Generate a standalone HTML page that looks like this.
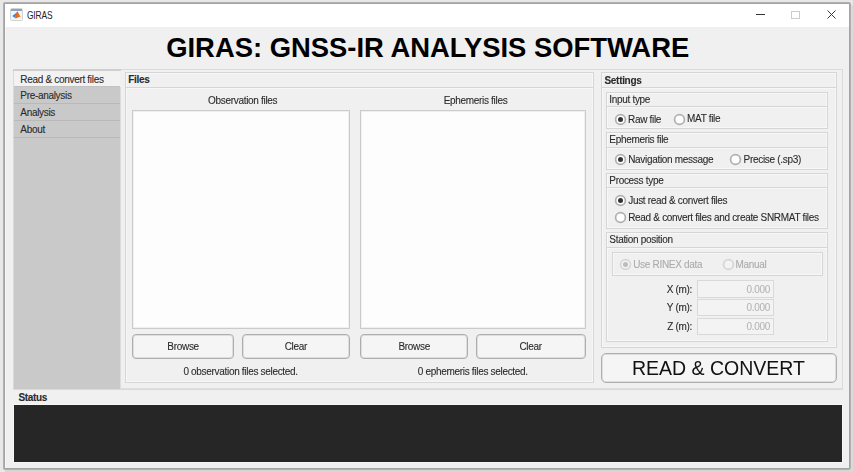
<!DOCTYPE html>
<html><head><meta charset="utf-8"><style>
html,body{margin:0;padding:0;}
body{width:853px;height:472px;overflow:hidden;background:#e8e8e8;position:relative;font-family:"Liberation Sans",sans-serif;}
.r{position:absolute;}
.t{position:absolute;white-space:nowrap;-webkit-text-stroke:0.1px currentColor;}
#wrap{position:absolute;left:0;top:0;width:853px;height:472px;filter:blur(0.3px);}
</style></head><body><div id="wrap">
<div class="r" style="left:851px;top:5px;width:2px;height:467px;background:#dadada;"></div>
<div class="r" style="left:5px;top:470px;width:848px;height:2px;background:#d6d6d6;"></div>
<div class="r" style="left:3px;top:2px;width:848px;height:468px;border:2px solid #b0b0b0;border-radius:2px;box-sizing:border-box;background:#f0f0f0;"></div>
<div class="r" style="left:4px;top:3px;width:846px;height:466px;border:1px solid #a4a4a4;border-radius:1px;box-sizing:border-box;"></div>
<div class="r" style="left:5px;top:4px;width:844px;height:23px;background:#ffffff;"></div>
<div class="r" style="left:5px;top:27px;width:1px;height:441px;background:#f7f7f7;"></div>
<div class="t" style="left:26.80px;top:9.61px;font-size:10.5px;line-height:10.5px;font-weight:400;color:#222;letter-spacing:-0.2px;transform:scaleX(0.8);transform-origin:0 0;-webkit-text-stroke:0;">GIRAS</div>
<svg class="r" style="left:10px;top:8px" width="13" height="13" viewBox="0 0 13 13">
<rect x="0.5" y="0.5" width="12" height="12" rx="1" fill="#f6f6f6" stroke="#d2d2d2"/>
<rect x="1" y="1" width="11" height="2" fill="#86a4cc"/>
<path d="M2.2 8 L6.8 4.5 L5.4 8.6 L5.9 10.4 Z" fill="#3d86d0"/>
<path d="M7.5 3.3 L10.8 9.5 L9.5 8.8 L5.8 10.5 L5 8 Z" fill="#e66a1f"/>
<path d="M6.5 4.8 L7.5 3.3 L5.2 8.5 Z" fill="#b8401a"/>
</svg>
<div class="r" style="left:756px;top:14px;width:9px;height:1px;background:#333;"></div>
<div class="r" style="left:791px;top:11px;width:9px;height:8px;border:1px solid #cccccc;box-sizing:border-box;"></div>
<svg class="r" style="left:827px;top:10px" width="9" height="9" viewBox="0 0 9 9">
<path d="M0.5 0.5 L8.5 8.5 M8.5 0.5 L0.5 8.5" stroke="#3a3a3a" stroke-width="1"/></svg>
<div class="t" style="left:166.20px;top:33.91px;font-size:27.4px;line-height:27.4px;font-weight:700;color:#000;letter-spacing:0px;-webkit-text-stroke:0;">GIRAS: GNSS-IR ANALYSIS SOFTWARE</div>
<div class="r" style="left:13px;top:69px;width:830px;height:321px;border:1px solid #dadada;box-sizing:border-box;"></div>
<div class="r" style="left:13px;top:388px;width:830px;height:1px;background:#dedede;"></div>
<div class="r" style="left:14px;top:86px;width:106px;height:303px;background:#c9c9c9;"></div>
<div class="r" style="left:14px;top:71px;width:106px;height:15px;background:#f2f2f2;"></div>
<div class="r" style="left:13px;top:69px;width:108px;height:2px;background:#cfcfcf;"></div>
<div class="r" style="left:14px;top:86px;width:106px;height:1px;background:#c2c2c2;"></div>
<div class="r" style="left:120px;top:87px;width:1px;height:302px;background:#dcdcdc;"></div>
<div class="r" style="left:14px;top:103px;width:106px;height:1px;background:#b9b9b9;"></div>
<div class="r" style="left:14px;top:120px;width:106px;height:1px;background:#b9b9b9;"></div>
<div class="r" style="left:14px;top:137px;width:106px;height:1px;background:#b9b9b9;"></div>
<div class="t" style="left:20.30px;top:75.23px;font-size:10px;line-height:10px;font-weight:400;color:#2b2b2b;letter-spacing:-0.31px;">Read &amp; convert files</div>
<div class="t" style="left:20.30px;top:91.33px;font-size:10px;line-height:10px;font-weight:400;color:#2b2b2b;letter-spacing:-0.31px;">Pre-analysis</div>
<div class="t" style="left:20.30px;top:108.33px;font-size:10px;line-height:10px;font-weight:400;color:#2b2b2b;letter-spacing:-0.31px;">Analysis</div>
<div class="t" style="left:20.30px;top:125.44px;font-size:10px;line-height:10px;font-weight:400;color:#2b2b2b;letter-spacing:-0.31px;">About</div>
<div class="r" style="left:125px;top:72px;width:469px;height:311px;border:1px solid #d6d6d6;box-sizing:border-box;"></div>
<div class="r" style="left:126px;top:73px;width:467px;height:309px;border:1px solid #f7f7f7;box-sizing:border-box;"></div>
<div class="r" style="left:126px;top:87px;width:467px;height:1px;background:#d6d6d6;"></div>
<div class="r" style="left:126px;top:88px;width:467px;height:1px;background:#f7f7f7;"></div>
<div class="t" style="left:128.20px;top:75.33px;font-size:10px;line-height:10px;font-weight:700;color:#2b2b2b;letter-spacing:-0.31px;">Files</div>
<div class="t" style="left:-57.30px;width:600px;text-align:center;top:95.83px;font-size:10px;line-height:10px;font-weight:400;color:#2b2b2b;letter-spacing:-0.31px;">Observation files</div>
<div class="t" style="left:175.50px;width:600px;text-align:center;top:96.03px;font-size:10px;line-height:10px;font-weight:400;color:#2b2b2b;letter-spacing:-0.31px;">Ephemeris files</div>
<div class="r" style="left:132px;top:110px;width:218px;height:219px;border:1px solid #cbcbcb;background:#fdfdfd;box-sizing:border-box;box-shadow:inset 0 0 0 1px #efefef;"></div>
<div class="r" style="left:360px;top:110px;width:226px;height:219px;border:1px solid #cbcbcb;background:#fdfdfd;box-sizing:border-box;box-shadow:inset 0 0 0 1px #efefef;"></div>
<div class="r" style="left:132px;top:334px;width:102px;height:25px;border:1px solid #aeaeae;border-radius:4px;background:#f5f5f5;box-sizing:border-box;box-shadow:inset 0 0 0 1px #dedede;"></div>
<div class="r" style="left:242px;top:334px;width:108px;height:25px;border:1px solid #aeaeae;border-radius:4px;background:#f5f5f5;box-sizing:border-box;box-shadow:inset 0 0 0 1px #dedede;"></div>
<div class="r" style="left:360px;top:334px;width:108px;height:25px;border:1px solid #aeaeae;border-radius:4px;background:#f5f5f5;box-sizing:border-box;box-shadow:inset 0 0 0 1px #dedede;"></div>
<div class="r" style="left:476px;top:334px;width:110px;height:25px;border:1px solid #aeaeae;border-radius:4px;background:#f5f5f5;box-sizing:border-box;box-shadow:inset 0 0 0 1px #dedede;"></div>
<div class="t" style="left:-116.90px;width:600px;text-align:center;top:342.34px;font-size:10px;line-height:10px;font-weight:400;color:#2b2b2b;letter-spacing:-0.31px;">Browse</div>
<div class="t" style="left:-4.20px;width:600px;text-align:center;top:342.34px;font-size:10px;line-height:10px;font-weight:400;color:#2b2b2b;letter-spacing:-0.31px;">Clear</div>
<div class="t" style="left:114.20px;width:600px;text-align:center;top:342.34px;font-size:10px;line-height:10px;font-weight:400;color:#2b2b2b;letter-spacing:-0.31px;">Browse</div>
<div class="t" style="left:230.60px;width:600px;text-align:center;top:342.34px;font-size:10px;line-height:10px;font-weight:400;color:#2b2b2b;letter-spacing:-0.31px;">Clear</div>
<div class="t" style="left:-59.40px;width:600px;text-align:center;top:367.34px;font-size:10px;line-height:10px;font-weight:400;color:#2b2b2b;letter-spacing:-0.31px;">0 observation files selected.</div>
<div class="t" style="left:172.80px;width:600px;text-align:center;top:367.34px;font-size:10px;line-height:10px;font-weight:400;color:#2b2b2b;letter-spacing:-0.31px;">0 ephemeris files selected.</div>
<div class="r" style="left:601px;top:72px;width:236px;height:276px;border:1px solid #d6d6d6;box-sizing:border-box;"></div>
<div class="r" style="left:602px;top:73px;width:234px;height:274px;border:1px solid #f7f7f7;box-sizing:border-box;"></div>
<div class="r" style="left:602px;top:87px;width:234px;height:1px;background:#d6d6d6;"></div>
<div class="r" style="left:602px;top:88px;width:234px;height:1px;background:#f7f7f7;"></div>
<div class="t" style="left:604.50px;top:75.63px;font-size:10px;line-height:10px;font-weight:700;color:#2b2b2b;letter-spacing:-0.31px;">Settings</div>
<div class="r" style="left:606px;top:92px;width:222px;height:37px;border:1px solid #d6d6d6;box-sizing:border-box;"></div>
<div class="r" style="left:607px;top:93px;width:220px;height:35px;border:1px solid #f7f7f7;box-sizing:border-box;"></div>
<div class="r" style="left:607px;top:106px;width:220px;height:1px;background:#d6d6d6;"></div>
<div class="r" style="left:607px;top:107px;width:220px;height:1px;background:#f7f7f7;"></div>
<div class="t" style="left:609.30px;top:94.94px;font-size:10px;line-height:10px;font-weight:400;color:#2b2b2b;letter-spacing:-0.31px;">Input type</div>
<svg class="r" style="left:614.00px;top:112.50px" width="13" height="13" viewBox="0 0 13 13"><circle cx="6.5" cy="6.5" r="4.9" fill="#ffffff" stroke="#b0b0b0" stroke-width="1.7"/><circle cx="6.5" cy="6.5" r="2.5" fill="#333333"/></svg>
<div class="t" style="left:628.00px;top:114.53px;font-size:10px;line-height:10px;font-weight:400;color:#2b2b2b;letter-spacing:-0.31px;">Raw file</div>
<svg class="r" style="left:673.20px;top:112.50px" width="13" height="13" viewBox="0 0 13 13"><circle cx="6.5" cy="6.5" r="4.9" fill="#ffffff" stroke="#b0b0b0" stroke-width="1.7"/></svg>
<div class="t" style="left:687.00px;top:114.44px;font-size:10px;line-height:10px;font-weight:400;color:#2b2b2b;letter-spacing:-0.31px;">MAT file</div>
<div class="r" style="left:606px;top:132px;width:222px;height:38px;border:1px solid #d6d6d6;box-sizing:border-box;"></div>
<div class="r" style="left:607px;top:133px;width:220px;height:36px;border:1px solid #f7f7f7;box-sizing:border-box;"></div>
<div class="r" style="left:607px;top:147px;width:220px;height:1px;background:#d6d6d6;"></div>
<div class="r" style="left:607px;top:148px;width:220px;height:1px;background:#f7f7f7;"></div>
<div class="t" style="left:609.30px;top:135.34px;font-size:10px;line-height:10px;font-weight:400;color:#2b2b2b;letter-spacing:-0.31px;">Ephemeris file</div>
<svg class="r" style="left:614.00px;top:152.70px" width="13" height="13" viewBox="0 0 13 13"><circle cx="6.5" cy="6.5" r="4.9" fill="#ffffff" stroke="#b0b0b0" stroke-width="1.7"/><circle cx="6.5" cy="6.5" r="2.5" fill="#333333"/></svg>
<div class="t" style="left:628.20px;top:155.03px;font-size:10px;line-height:10px;font-weight:400;color:#2b2b2b;letter-spacing:-0.31px;">Navigation message</div>
<svg class="r" style="left:729.40px;top:152.70px" width="13" height="13" viewBox="0 0 13 13"><circle cx="6.5" cy="6.5" r="4.9" fill="#ffffff" stroke="#b0b0b0" stroke-width="1.7"/></svg>
<div class="t" style="left:743.60px;top:155.03px;font-size:10px;line-height:10px;font-weight:400;color:#2b2b2b;letter-spacing:-0.31px;">Precise (.sp3)</div>
<div class="r" style="left:606px;top:173px;width:222px;height:56px;border:1px solid #d6d6d6;box-sizing:border-box;"></div>
<div class="r" style="left:607px;top:174px;width:220px;height:54px;border:1px solid #f7f7f7;box-sizing:border-box;"></div>
<div class="r" style="left:607px;top:187px;width:220px;height:1px;background:#d6d6d6;"></div>
<div class="r" style="left:607px;top:188px;width:220px;height:1px;background:#f7f7f7;"></div>
<div class="t" style="left:609.30px;top:175.63px;font-size:10px;line-height:10px;font-weight:400;color:#2b2b2b;letter-spacing:-0.31px;">Process type</div>
<svg class="r" style="left:614.00px;top:193.50px" width="13" height="13" viewBox="0 0 13 13"><circle cx="6.5" cy="6.5" r="4.9" fill="#ffffff" stroke="#b0b0b0" stroke-width="1.7"/><circle cx="6.5" cy="6.5" r="2.5" fill="#333333"/></svg>
<div class="t" style="left:628.20px;top:195.84px;font-size:10px;line-height:10px;font-weight:400;color:#2b2b2b;letter-spacing:-0.31px;">Just read &amp; convert files</div>
<svg class="r" style="left:614.00px;top:210.50px" width="13" height="13" viewBox="0 0 13 13"><circle cx="6.5" cy="6.5" r="4.9" fill="#ffffff" stroke="#b0b0b0" stroke-width="1.7"/></svg>
<div class="t" style="left:628.20px;top:212.73px;font-size:10px;line-height:10px;font-weight:400;color:#2b2b2b;letter-spacing:-0.31px;">Read &amp; convert files and create SNRMAT files</div>
<div class="r" style="left:606px;top:232px;width:222px;height:110px;border:1px solid #d6d6d6;box-sizing:border-box;"></div>
<div class="r" style="left:607px;top:233px;width:220px;height:108px;border:1px solid #f7f7f7;box-sizing:border-box;"></div>
<div class="r" style="left:607px;top:247px;width:220px;height:1px;background:#d6d6d6;"></div>
<div class="r" style="left:607px;top:248px;width:220px;height:1px;background:#f7f7f7;"></div>
<div class="t" style="left:609.30px;top:235.34px;font-size:10px;line-height:10px;font-weight:400;color:#2b2b2b;letter-spacing:-0.31px;">Station position</div>
<div class="r" style="left:612px;top:252px;width:211px;height:24px;border:1px solid #d6d6d6;box-sizing:border-box;"></div>
<div class="r" style="left:613px;top:253px;width:209px;height:22px;border:1px solid #f7f7f7;box-sizing:border-box;"></div>
<svg class="r" style="left:619.10px;top:258.30px" width="13" height="13" viewBox="0 0 13 13"><circle cx="6.5" cy="6.5" r="4.9" fill="#f3f3f3" stroke="#d6d6d6" stroke-width="1.7"/><circle cx="6.5" cy="6.5" r="2.5" fill="#bcbcbc"/></svg>
<div class="t" style="left:633.20px;top:260.34px;font-size:10px;line-height:10px;font-weight:400;color:#ababab;letter-spacing:-0.31px;">Use RINEX data</div>
<svg class="r" style="left:721.70px;top:258.10px" width="13" height="13" viewBox="0 0 13 13"><circle cx="6.5" cy="6.5" r="4.9" fill="#f3f3f3" stroke="#d6d6d6" stroke-width="1.7"/></svg>
<div class="t" style="left:735.60px;top:260.34px;font-size:10px;line-height:10px;font-weight:400;color:#ababab;letter-spacing:-0.31px;">Manual</div>
<div class="r" style="left:697px;top:280px;width:77px;height:18px;border:1px solid #d9d9d9;background:#f3f3f3;box-sizing:border-box;"></div>
<div class="t" style="left:92.00px;width:600px;text-align:right;top:285.14px;font-size:10px;line-height:10px;font-weight:400;color:#2b2b2b;letter-spacing:-0.31px;">X (m):</div>
<div class="t" style="left:170.00px;width:600px;text-align:right;top:285.14px;font-size:10px;line-height:10px;font-weight:400;color:#b5b5b5;letter-spacing:-0.31px;">0.000</div>
<div class="r" style="left:697px;top:299px;width:77px;height:17px;border:1px solid #d9d9d9;background:#f3f3f3;box-sizing:border-box;"></div>
<div class="t" style="left:92.00px;width:600px;text-align:right;top:303.44px;font-size:10px;line-height:10px;font-weight:400;color:#2b2b2b;letter-spacing:-0.31px;">Y (m):</div>
<div class="t" style="left:170.00px;width:600px;text-align:right;top:303.44px;font-size:10px;line-height:10px;font-weight:400;color:#b5b5b5;letter-spacing:-0.31px;">0.000</div>
<div class="r" style="left:697px;top:318px;width:77px;height:17px;border:1px solid #d9d9d9;background:#f3f3f3;box-sizing:border-box;"></div>
<div class="t" style="left:92.00px;width:600px;text-align:right;top:321.94px;font-size:10px;line-height:10px;font-weight:400;color:#2b2b2b;letter-spacing:-0.31px;">Z (m):</div>
<div class="t" style="left:170.00px;width:600px;text-align:right;top:321.94px;font-size:10px;line-height:10px;font-weight:400;color:#b5b5b5;letter-spacing:-0.31px;">0.000</div>
<div class="r" style="left:601px;top:353px;width:236px;height:30px;border:1px solid #aeaeae;border-radius:5px;background:#f5f5f5;box-sizing:border-box;box-shadow:inset 0 0 0 1px #dedede;"></div>
<div class="t" style="left:418.50px;width:600px;text-align:center;top:359.09px;font-size:19.5px;line-height:19.5px;font-weight:400;color:#111;letter-spacing:0px;-webkit-text-stroke:0;">READ &amp; CONVERT</div>
<div class="t" style="left:18.40px;top:392.94px;font-size:10px;line-height:10px;font-weight:700;color:#2b2b2b;letter-spacing:-0.31px;">Status</div>
<div class="r" style="left:13px;top:404px;width:830px;height:59px;background:#f6f6f6;"></div>
<div class="r" style="left:14px;top:405px;width:828px;height:57px;background:#262626;"></div>
</div></body></html>
